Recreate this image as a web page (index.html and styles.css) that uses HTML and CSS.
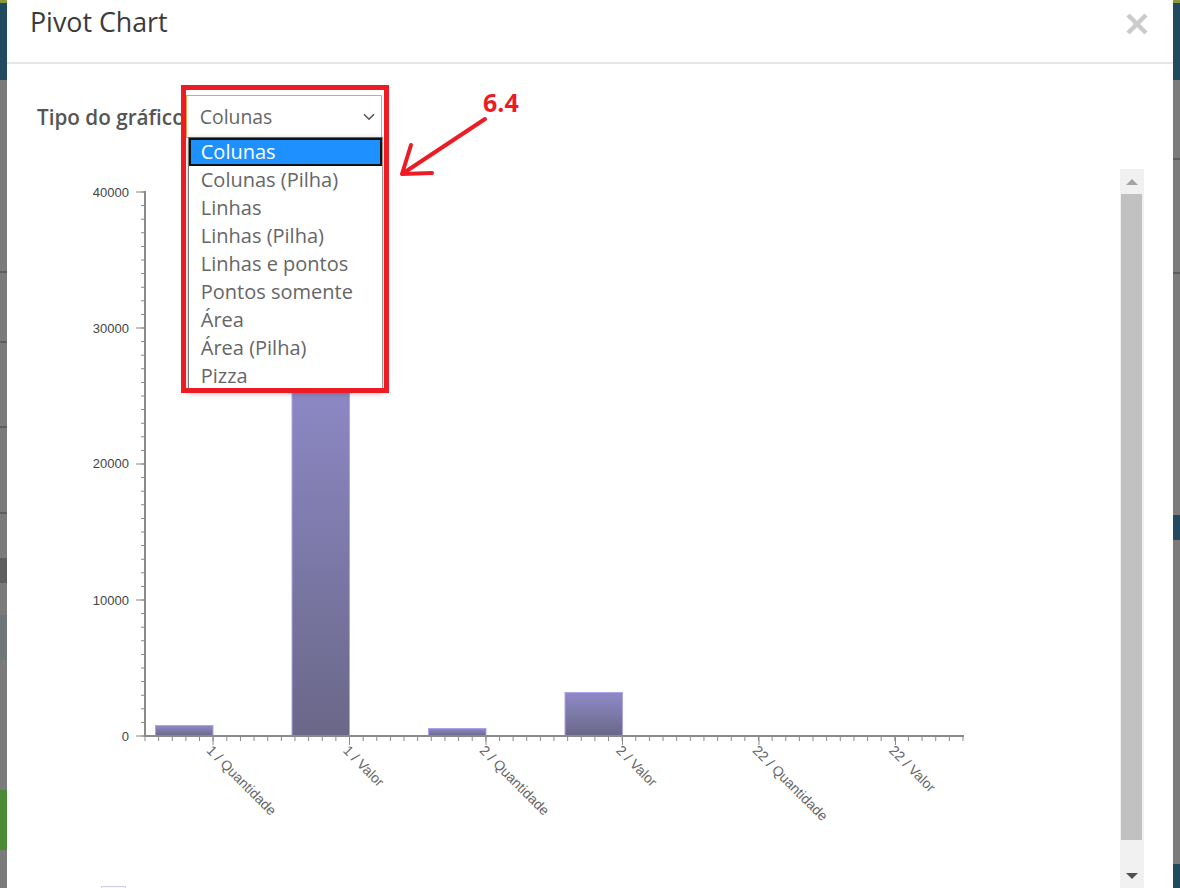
FILE: index.html
```html
<!DOCTYPE html>
<html lang="pt">
<head>
  <meta charset="UTF-8">
  <title>Pivot Chart</title>
  <link rel="stylesheet" href="styles.css">
</head>
<body>
  <div class="edge edge-left"></div>

  <div class="modal">
    <div class="modal-header">
      <h4 class="modal-title">Pivot Chart</h4>
      <svg class="close" width="22" height="22" viewBox="0 0 22 22">
        <path d="M2 2L20 20M20 2L2 20" stroke="#cbcbcb" stroke-width="4.5"/>
      </svg>
    </div>

    <div class="modal-body">
      <div class="type-row">
        <span class="type-label">Tipo do gráfico</span>
        <div class="select-wrap">
          <div class="select">
            <span>Colunas</span>
            <svg width="12" height="8" viewBox="0 0 12 8">
              <path d="M1 1.2L6 6.2L11 1.2" fill="none" stroke="#555" stroke-width="1.6"/>
            </svg>
          </div>
          <ul class="select-list">
            <li class="active">Colunas</li>
            <li>Colunas (Pilha)</li>
            <li>Linhas</li>
            <li>Linhas (Pilha)</li>
            <li>Linhas e pontos</li>
            <li>Pontos somente</li>
            <li>Área</li>
            <li>Área (Pilha)</li>
            <li>Pizza</li>
          </ul>
          <div class="callout-box"></div>
          <svg class="callout" width="135" height="95" viewBox="0 0 135 95">
            <text x="89" y="27" class="callout-num">6.4</text>
            <path d="M91 34L8 89M17 60L8 89L38 88" fill="none" stroke="#ed1c24" stroke-width="4" stroke-linecap="round" stroke-linejoin="round"/>
          </svg>
        </div>
      </div>

      <div class="chart-wrap">
        <svg class="chart" width="1083" height="719" viewBox="37 169 1083 719">
          <defs>
            <linearGradient id="barFill" x1="0" y1="0" x2="0" y2="1">
              <stop offset="0" stop-color="#8f8ac8"/>
              <stop offset="1" stop-color="#6a6788"/>
            </linearGradient>
          </defs>

          <!-- y axis -->
          <g class="axis">
            <line x1="145" y1="191" x2="145" y2="737" stroke-width="2"/>
            <line x1="143" y1="191.5" x2="143" y2="737" stroke-width="4" stroke-dasharray="1 12.6"/>
            <line x1="140.5" y1="191.5" x2="140.5" y2="737" stroke-width="9" stroke-dasharray="1 135"/>
          </g>
          <g class="y-labels">
            <text x="129" y="197">40000</text>
            <text x="129" y="333">30000</text>
            <text x="129" y="468">20000</text>
            <text x="129" y="605">10000</text>
            <text x="129" y="741">0</text>
          </g>

          <!-- bars -->
          <g class="bars">
            <rect x="155.5" y="725.5" width="57.5" height="10.5"/>
            <rect x="292" y="370" width="57.5" height="366"/>
            <rect x="428.5" y="728.5" width="57.5" height="7.5"/>
            <rect x="565" y="692.5" width="57.5" height="43.5"/>
          </g>

          <!-- x axis -->
          <g class="axis">
            <line x1="144" y1="736" x2="964" y2="736" stroke-width="2"/>
            <line x1="144.5" y1="738.5" x2="964" y2="738.5" stroke-width="5" stroke-dasharray="1 12.633"/>
            <line x1="212.5" y1="740.5" x2="897" y2="740.5" stroke-width="9" stroke-dasharray="1 135.5"/>
          </g>
          <g class="x-labels">
            <text transform="translate(212 745) rotate(45)" y="9">1 / Quantidade</text>
            <text transform="translate(348.5 745) rotate(45)" y="9">1 / Valor</text>
            <text transform="translate(485 745) rotate(45)" y="9">2 / Quantidade</text>
            <text transform="translate(621.5 745) rotate(45)" y="9">2 / Valor</text>
            <text transform="translate(758 745) rotate(45)" y="9">22 / Quantidade</text>
            <text transform="translate(894.5 745) rotate(45)" y="9">22 / Valor</text>
          </g>

          <!-- legend -->
          <rect x="101.5" y="886.5" width="24" height="12" fill="#f6f5fc" stroke="#d2cdec"/>
        </svg>

        <div class="scrollbar">
          <div class="scroll-btn"><span class="tri-up"></span></div>
          <div class="scroll-thumb"></div>
          <div class="scroll-fill"></div>
          <div class="scroll-btn"><span class="tri-down"></span></div>
        </div>
      </div>
    </div>
  </div>

  <div class="edge edge-right"></div>
</body>
</html>
```

FILE: styles.css
```css
body {
  margin: 0;
  height: 888px;
  overflow: hidden;
  display: flex;
  font-family: "Open Sans", "Liberation Sans", sans-serif;
  background: #7b7b7b;
}

.edge {
  width: 7px;
  flex: none;
}

.edge-left {
  background: linear-gradient(to bottom,
    #8c9a3c 0 3px, #1f4a5f 3px 80px, #7b7b7b 80px 271px, #5e5e5e 271px 273px,
    #7b7b7b 273px 341px, #5e5e5e 341px 343px, #7b7b7b 343px 426px, #5e5e5e 426px 428px,
    #7b7b7b 428px 512px, #5e5e5e 512px 514px, #7b7b7b 514px 558px, #5f5f5f 558px 583px,
    #7b7b7b 583px 615px, #6f767a 615px 660px, #7b7b7b 660px 790px, #4d8a36 790px 850px,
    #7b7b7b 850px);
}

.edge-right {
  background: linear-gradient(to bottom,
    #8c9a3c 0 3px, #1f4a5f 3px 80px, #7b7b7b 80px 158px, #5e5e5e 158px 160px,
    #7b7b7b 160px 272px, #5e5e5e 272px 274px, #7b7b7b 274px 515px, #1f4a5f 515px 540px,
    #7b7b7b 540px 864px, #1f4a5f 864px);
}

.modal {
  width: 1166px;
  flex: none;
  background: #fff;
  position: relative;
}

.modal-header {
  height: 62px;
  border-bottom: 2px solid #e5e5e5;
  display: flex;
  justify-content: space-between;
  align-items: flex-start;
  padding: 0 25px 0 23px;
}

.modal-title {
  margin: 4px 0 0;
  font-size: 26.8px;
  line-height: 36px;
  font-weight: 400;
  color: #3a3a3a;
}

.close {
  margin-top: 13px;
}

.modal-body {
  padding: 31px 29px 0 30px;
}

.type-row {
  display: flex;
  align-items: center;
  height: 43px;
}

.type-label {
  font-size: 20.7px;
  font-weight: 600;
  color: #555;
  margin-right: 1px;
}

.select-wrap {
  position: relative;
}

.select {
  width: 196px;
  height: 43px;
  box-sizing: border-box;
  border: 1px solid #f3a14a;
  display: flex;
  align-items: center;
  justify-content: space-between;
  padding: 0 6px 0 13px;
  font-size: 19.4px;
  color: #666;
}

.select-list {
  position: absolute;
  top: 42px;
  left: 2px;
  width: 195px;
  box-sizing: border-box;
  margin: 0;
  padding: 0;
  list-style: none;
  background: #fff;
  border: 1px solid #999;
  border-top-color: #666;
  border-left-color: #777;
  box-shadow: 0 2px 6px rgba(0, 0, 0, 0.3);
}

.select-list li {
  height: 28px;
  line-height: 28px;
  padding-left: 12px;
  font-size: 20px;
  color: #666;
}

.select-list li.active {
  box-sizing: border-box;
  border: 2px solid #111;
  line-height: 24px;
  padding-left: 10px;
  background: #1e90ff;
  color: #fff;
}

.callout-box {
  position: absolute;
  left: -5px;
  top: -10px;
  width: 208px;
  height: 308px;
  box-sizing: border-box;
  border: 5px solid #ed1c24;
}

.callout {
  position: absolute;
  left: 208px;
  top: -10px;
}

.callout-num {
  font-family: "Open Sans", sans-serif;
  font-size: 25px;
  font-weight: 700;
  fill: #ed1c24;
}

.chart-wrap {
  display: flex;
  margin-top: 31px;
  height: 719px;
}

.chart {
  display: block;
  flex: none;
}

.axis line {
  stroke: #8a8a8a;
}

.y-labels text {
  font-family: "Liberation Sans", Arial, sans-serif;
  font-size: 13px;
  fill: #444;
  text-anchor: end;
}

.x-labels text {
  font-family: "Liberation Sans", Arial, sans-serif;
  font-size: 14px;
  fill: #666;
}

.bars rect {
  fill: url(#barFill);
  stroke: #aaa4e8;
  stroke-width: 1;
}

.scrollbar {
  width: 24px;
  flex: none;
  background: #f1f1f1;
  display: flex;
  flex-direction: column;
}

.scroll-btn {
  height: 25px;
  display: flex;
  align-items: center;
  justify-content: center;
}

.scroll-thumb {
  height: 646px;
  margin: 0 2px 0 1px;
  background: #c1c1c1;
}

.scroll-fill {
  flex: 1;
}

.tri-up {
  width: 0;
  height: 0;
  border-left: 6px solid transparent;
  border-right: 6px solid transparent;
  border-bottom: 6px solid #a3a3a3;
}

.tri-down {
  width: 0;
  height: 0;
  border-left: 6px solid transparent;
  border-right: 6px solid transparent;
  border-top: 6px solid #505050;
}
```
